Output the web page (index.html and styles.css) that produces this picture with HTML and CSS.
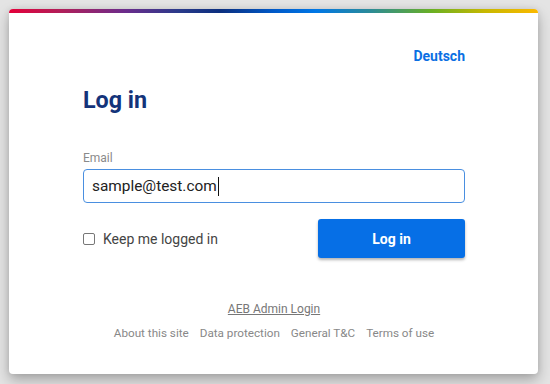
FILE: index.html
```html
<!DOCTYPE html>
<html lang="en">
<head>
<meta charset="utf-8">
<title>Log in</title>
<link rel="stylesheet" href="styles.css">
</head>
<body>
<main class="card">
  <div class="card-bar"></div>
  <div class="card-body">
    <div class="lang-row"><a class="lang" href="#">Deutsch</a></div>
    <h1 class="title">Log in</h1>
    <label class="field-label" for="email">Email</label>
    <div class="input"><span class="input-text">sample@test.com</span><span class="caret"></span></div>
    <div class="actions">
      <label class="keep"><span class="checkbox"></span><span>Keep me logged in</span></label>
      <button class="btn" type="button">Log in</button>
    </div>
    <div class="admin"><a href="#">AEB Admin Login</a></div>
    <nav class="footer-links">
      <a href="#">About this site</a>
      <a href="#">Data protection</a>
      <a href="#">General T&amp;C</a>
      <a href="#">Terms of use</a>
    </nav>
  </div>
</main>
</body>
</html>
```
FILE: styles.css
```css
html, body {
  margin: 0;
  height: 100%;
}
body {
  background: #e4e4e4;
  font-family: Roboto, "Liberation Sans", sans-serif;
  padding: 9px 12px 0 9px;
  box-sizing: border-box;
  overflow: hidden;
}
.card {
  width: 529px;
  height: 365px;
  background: #fff;
  border-radius: 4px;
  overflow: hidden;
  box-shadow: 0 6px 14px rgba(0,0,0,0.28), 0 0 6px rgba(0,0,0,0.08);
  display: flex;
  flex-direction: column;
}
.card-bar {
  height: 4px;
  flex: none;
  background: linear-gradient(to right, #e4003a 0%, #b01f5a 10%, #6b2c8c 22%, #2a3a8a 32%, #0b2f7f 40%, #0059c8 50%, #0077e6 58%, #2a8a9a 68%, #6ab023 80%, #c8b800 90%, #fbb900 100%);
}
.card-body {
  padding: 35px 73px 0 74px;
  display: flex;
  flex-direction: column;
}
.lang-row {
  display: flex;
  justify-content: flex-end;
}
.lang {
  font-size: 14px;
  line-height: 17px;
  font-weight: 700;
  color: #0a6fe3;
  text-decoration: none;
}
.title {
  margin: 21px 0 0;
  font-size: 23.3px;
  line-height: 28px;
  font-weight: 700;
  color: #14337a;
}
.field-label {
  margin-top: 37px;
  font-size: 12px;
  line-height: 14px;
  color: #8a8a8a;
}
.input {
  margin-top: 4px;
  height: 34px;
  box-sizing: border-box;
  border: 1px solid #4a8fe0;
  border-radius: 4px;
  display: flex;
  align-items: center;
  padding-left: 8px;
}
.input-text {
  font-size: 15.4px;
  color: #222;
}
.caret {
  width: 1px;
  height: 19px;
  background: #111;
  margin-left: 1px;
}
.actions {
  margin-top: 16px;
  display: flex;
  justify-content: space-between;
  align-items: center;
}
.keep {
  display: flex;
  align-items: center;
  gap: 8px;
  font-size: 14px;
  color: #444;
}
.checkbox {
  width: 12px;
  height: 12px;
  border: 1px solid #777;
  border-radius: 2px;
  box-sizing: border-box;
}
.btn {
  width: 147px;
  height: 39px;
  border: none;
  border-radius: 3px;
  background: #066fe6;
  color: #fff;
  font-family: inherit;
  font-size: 14px;
  font-weight: 700;
  box-shadow: 0 2px 3px rgba(0,0,0,0.3);
}
.admin {
  margin-top: 44px;
  text-align: center;
  font-size: 12px;
  line-height: 14px;
}
.admin a {
  color: #777;
}
.footer-links {
  margin-top: 10px;
  display: flex;
  justify-content: center;
  gap: 11px;
  font-size: 11.7px;
  line-height: 14px;
}
.footer-links a {
  color: #888;
  text-decoration: none;
}
```
